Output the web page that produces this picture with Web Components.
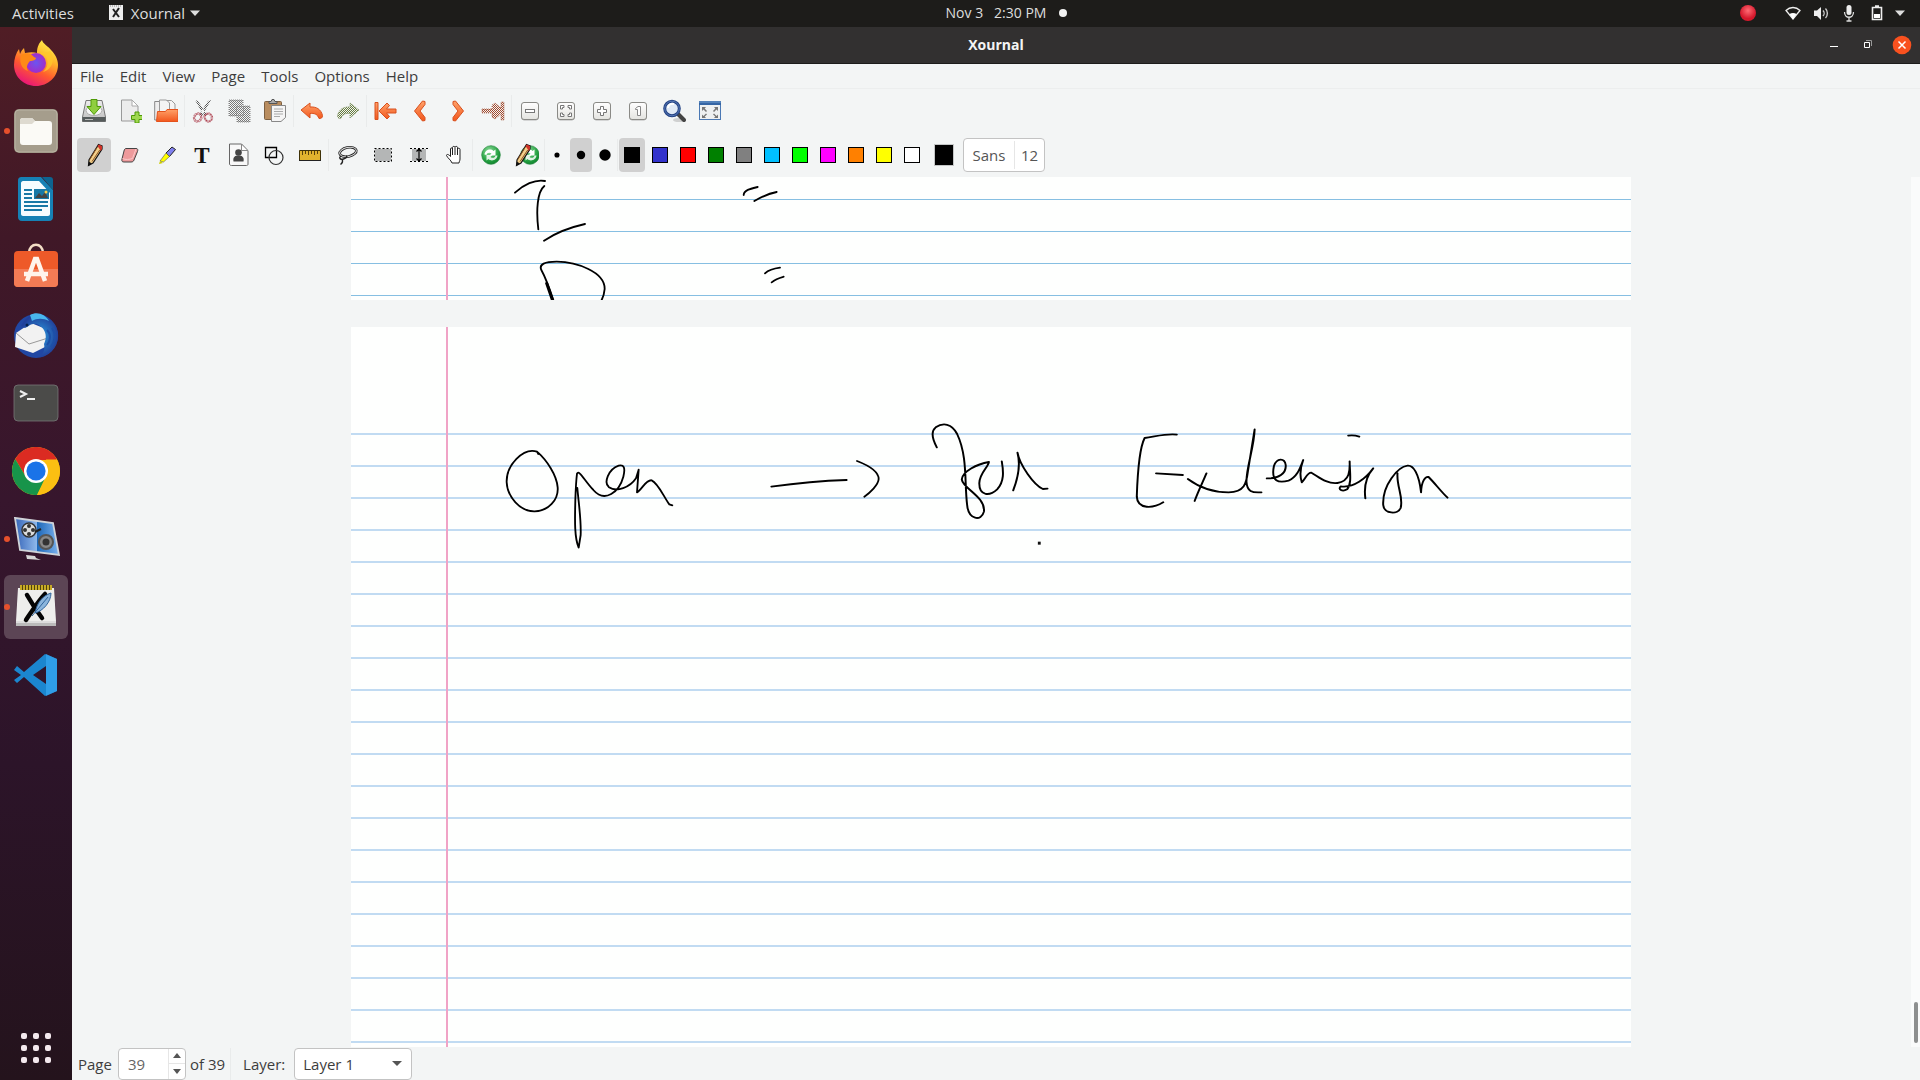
<!DOCTYPE html>
<html lang="en">
<head>
<meta charset="utf-8">
<title>Xournal</title>
<style>
html, body { margin: 0; height: 100%; }
body { font-family: "Open Sans", "Noto Sans", sans-serif; font-size: 15px; line-height: 20px; color: #3d3d3d; overflow: hidden; }
</style>
</head>
<body>
<desk-shell>
  <desk-topbar slot="top"></desk-topbar>
  <desk-launcher slot="side"></desk-launcher>
  <xj-window>
    <xj-titlebar slot="title">Xournal</xj-titlebar>
    <xj-menubar slot="bars"></xj-menubar>
    <xj-maintools slot="bars"></xj-maintools>
    <xj-pentools slot="bars"></xj-pentools>
    <xj-canvas></xj-canvas>
    <xj-statusbar slot="status"></xj-statusbar>
  </xj-window>
</desk-shell>
<script>
const define = (name, html, after) => {
  const t = document.createElement('template');
  t.innerHTML = html;
  customElements.define(name, class extends HTMLElement {
    connectedCallback() {
      if (this.shadowRoot) return;
      this.attachShadow({ mode: 'open' }).append(t.content.cloneNode(true));
      if (after) after(this, this.shadowRoot);
    }
  });
};

const checker = (id, c) => `<pattern id="${id}" width="2" height="2" patternUnits="userSpaceOnUse"><path d="M0 0h1v1H0zM1 1h1v1H1z" fill="${c}"/></pattern>`;
const orange = '<linearGradient id="o" x2="0" y2="1"><stop stop-color="#ffa26a"/><stop offset="1" stop-color="#f2571d"/></linearGradient>';
const tile = inner => `<linearGradient id="k" x2="0" y2="1"><stop stop-color="#fff"/><stop offset="1" stop-color="#e4e4e0"/></linearGradient><rect x="3.500" y="4" width="17" height="17" rx="2.500" fill="none" stroke="#777" opacity=".5"/><rect x="3.500" y="3.500" width="17" height="17" rx="2.500" fill="url(#k)" stroke="#8a8a86"/>${inner}`;
const greenBall = '<radialGradient id="g" cx=".4" cy=".3" r=".8"><stop stop-color="#8fdc9b"/><stop offset=".6" stop-color="#28a444"/><stop offset="1" stop-color="#087a26"/></radialGradient><circle cx="12" cy="12" r="9.300" fill="url(#g)" stroke="#2a8a43" stroke-width=".7"/><path d="M5.500 11.500C6 7 11.500 5 14.500 8l2-1.500v6h-6l2-2C10.500 9 8 9.500 7.500 12z" fill="#fff"/><path d="M18.500 12.500C18 17 12.500 19 9.500 16l-2 1.500V12h6l-2 2c2 1.500 4.500 1 5-1.500z" fill="#fff" opacity=".85"/>';
const pencil = '<path d="M16.500 1.500l3.500 1.500v3L11 20l-4.500 2.500L7 17z" fill="#f3cf8a" stroke="#111" stroke-width="1.200"/><path d="M15.500 3l1.300-1.400L20 3v3l-1.200 2z" fill="#cf3328"/><path d="M10 18.500L17.700 7M7.800 16.500L15 4.500" stroke="#8c5523" fill="none"/><path d="M7 18.800L6.300 23 10 20.500z" fill="#111"/>';

const ICONS = {
  save: '<linearGradient id="m" x2="0" y2="1"><stop stop-color="#eee"/><stop offset="1" stop-color="#bbb"/></linearGradient><path d="M4 1.500h16L23.500 18v4.500H.500V18z" fill="url(#m)" stroke="#777"/><path d="M.5 18h23v4.500H.5z" fill="#555b5b"/><path d="M3 20.500h8" stroke="#bbb"/><ellipse cx="12" cy="11.500" rx="8" ry="5" fill="#f7f7f7" stroke="#aaa"/><path d="M9 .5h6v7h4l-7 8-7-8h4z" fill="#8fce3f" stroke="#4e9a06"/>',
  newpage: '<path d="M3.500 1H14l6 6v15H3.500z" fill="#ececec" stroke="#999"/><path d="M14 1v6h6z" fill="#fff" stroke="#aaa"/><path d="M17 13h4v3.500h3.500v4H21V24h-4v-3.500h-3.500v-4H17z" fill="#9fd84f" stroke="#4e9a06"/>',
  open: orange+'<path d="M.7 2.500h6L8 4v17H.7z" fill="#eee" stroke="#888"/><path d="M5.500 1h7l3 3v9h-10zM12.500 1.500h5L21 5v8h-7" fill="#f4f4f4" stroke="#999"/><path d="M3.500 12.500h8l1.500-2h11v12H2.500z" fill="url(#o)" stroke="#e4521c"/>',
  cut: '<defs>'+checker('c','#555')+checker('r','#a52a3a')+'</defs><path d="M4 1l3 1 9 14-3 1zM20 1l-3 1L8 16l3 1z" fill="url(#c)"/><g fill="none" stroke="url(#r)" stroke-width="2.500"><ellipse cx="6.700" cy="18.500" rx="3.500" ry="4" transform="rotate(25 6.700 18.500)"/><ellipse cx="17.300" cy="18.500" rx="3.500" ry="4" transform="rotate(-25 17.300 18.500)"/></g>',
  copy: '<defs>'+checker('c','#777')+'</defs><path d="M2 1h14v6h7v16H10v-6H2z" fill="url(#c)"/><path d="M2 1h14v16H2zM10 7h13v16H10z" fill="none" stroke="#888" stroke-dasharray="1 1"/>',
  paste: '<rect x="1.500" y="2.500" width="17" height="18" rx="1" fill="#b98d5f" stroke="#7d6041"/><path d="M6 4.500V2.500h2L9 .500h2l1 2h2v2z" fill="#aaa" stroke="#555"/><path d="M8.500 6.500h14v12L18 22.500H8.500z" fill="#f5f5f5" stroke="#888"/><path d="M11 10h9M11 12.500h9M11 15h9M11 17.500h6" stroke="#aaa"/>',
  undo: orange+'<path d="M1 11L10 4v4c6-.5 11 2 12.500 8.500.3 2-1.500 3.500-3.500 3C17.500 15 14 14 10 14.500V19z" fill="url(#o)" stroke="#d8511f"/>',
  redo: '<defs>'+checker('c','#667b3c')+'</defs><path d="M23 11l-9-7v4C8 7.500 3 10 1.500 16.500c-.3 2 1.500 3.500 3.500 3C6.500 15 10 14 14 14.500V19z" fill="url(#c)" stroke="#84986a" stroke-dasharray="1 1"/>',
  first: orange+'<path d="M2 3.500h3v17H2zM6 12l8-8 2.500 2.500L13.500 10H23v4h-9.500l3 3.500L14 20z" fill="url(#o)" stroke="#d8511f"/>',
  prev: orange+'<path d="M16 2.500l-2.500-.5-8 10 8 10 2.500-.5v-3L11 12l5-6.500z" fill="url(#o)" stroke="#d8511f"/>',
  next: orange+'<path d="M8 2.500l2.500-.5 8 10-8 10L8 21.500v-3L13 12 8 5.500z" fill="url(#o)" stroke="#d8511f"/>',
  last: '<defs>'+checker('c','#a3492c')+'</defs><path d="M1 10h10V6l3-2 6 5V3h3v18h-3v-6l-6 5-3-2v-4H1z" fill="url(#c)" stroke="#b57a66" stroke-dasharray="1 1"/>',
  zoomout: tile('<rect x="7.500" y="10.500" width="9" height="3" fill="#fff" stroke="#777"/>'),
  fit: tile('<path d="M6.500 10V6.500H10v2H8.500V10zM14 6.500h3.500V10h-2V8.500H14zM6.500 14v3.500H10v-2H8.500V14zM14 17.500h3.500V14h-2v1.500H14z" fill="#fff" stroke="#777"/>'),
  zoomin: tile('<path d="M10.500 7.500h3v3h3v3h-3v3h-3v-3h-3v-3h3z" fill="#fff" stroke="#777"/>'),
  one: tile('<path d="M9.500 9.500L12 7.500h2.500v9h-3v-6h-2z" fill="#fff" stroke="#888"/>'),
  find: '<ellipse cx="17" cy="21" rx="6" ry="2" fill="#999" opacity=".4"/><path d="M16 15l6 6" stroke="#444" stroke-width="4" stroke-linecap="round"/><circle cx="10" cy="9.500" r="7.300" fill="#dfe9f6" stroke="#244384" stroke-width="3"/><circle cx="10" cy="9.500" r="7.300" fill="none" stroke="#5577b5"/><path d="M6 9c0-3 3-5 6-4" stroke="#fff" stroke-width="2" fill="none"/>',
  full: '<rect x="1.500" y="2.500" width="21" height="18" fill="#eef0f1" stroke="#4a78b4"/><path d="M1 2h22v4H1z" fill="#3465a4"/><path d="M1 3h22" stroke="#729fcf"/><path d="M4 8h4L6.700 9.500 9 12l-1 1-2.500-2.500L4 12zM20 8h-4l1.300 1.500L15 12l1 1 2.500-2.500L20 12zM4 19h4l-1.300-1.400L9 15.500l-1-1L5.500 17 4 15.500zM20 19h-4l1.300-1.400-2.300-2.100 1-1 2.500 2.500 1.500-1.500z" fill="#777"/>',
  pencil,
  eraser: '<path d="M8 5.500h10c2 0 2 1.500 1.500 3L16 17c-.5 1.500-1.500 2-3 2H6c-2 0-2.500-1-2-3l2-8c.3-1.500 1-2.500 2-2.500z" fill="#ee9a9c" stroke="#444"/><path d="M4.500 15.500c3 1.500 7 1 10 0L18 6" fill="none" stroke="#fbc9c9"/>',
  marker: '<path d="M12 10l6-6 3.500 2.500-6 7z" fill="#7f80ee" stroke="#222"/><path d="M12 10l3.500 3.500-6 5.500L6 18z" fill="#ff0" stroke="#555" stroke-width=".6"/><path d="M6 18l3 2-4 1z" fill="#cc0"/>',
  text: '<text x="12" y="20" text-anchor="middle" font-family="Liberation Serif" font-weight="bold" font-size="23" fill="#111">T</text>',
  image: '<path d="M3.500 1h12L22 8v13c0 1-.5 1.500-1.500 1.500h-15c-1 0-2-.5-2-1.500z" fill="#f8f8f8" stroke="#666"/><path d="M15.500 1v6.500H22z" fill="#fff" stroke="#888"/><circle cx="12.500" cy="9.500" r="3.300" fill="#444"/><path d="M7.500 18.500c-1-5 2-6 5-6s6 1 5 6z" fill="#444"/>',
  shapes: '<path d="M3.500 4.500h11v10h-11z" fill="none" stroke="#000" stroke-width="1.300"/><circle cx="14" cy="14.500" r="7" fill="none" stroke="#333" stroke-width="1.200"/>',
  ruler: '<path d="M1.500 7.500h21v10h-21z" fill="#e0b32e" stroke="#3f3208"/><path d="M1 17.500h22" stroke="#222"/><path d="M4.500 8v4M7.500 8v3M10.500 8v4M13.500 8v3M16.500 8v4M19.500 8v3" stroke="#5a430b"/>',
  lasso: '<ellipse cx="13" cy="9" rx="8.500" ry="4.500" transform="rotate(-12 13 9)" fill="none" stroke="#222" stroke-width="2.600"/><ellipse cx="13" cy="9" rx="8.500" ry="4.500" transform="rotate(-12 13 9)" fill="none" stroke="#ddd"/><path d="M6 13c-3 2 0 4 2.500 3S13 14 11 13M7 16c1 2 .5 4-1.500 5.500" fill="none" stroke="#222" stroke-width="1.400"/>',
  rect: '<path d="M4 6h16v12H4z" fill="#b4b6b6"/><path d="M3.500 5.500h17v13h-17z" fill="none" stroke="#000" stroke-dasharray="2 2"/>',
  vspace: '<path d="M5 6h14v12H5z" fill="#b4b6b6"/><path d="M3 5.500h18M3 18.500h18" stroke="#000" stroke-dasharray="2 2"/><path d="M12 6v12M9.500 8.500L12 6l2.500 2.500M9.500 15.500L12 18l2.500-2.500" fill="none" stroke="#000" stroke-width="1.200"/>',
  hand: '<path d="M9 20c-1-3-4.500-5-5.500-7.500 0-1.500 2-1.500 4 1V6c0-1.500 2-1.500 2 0V4.500c0-1.500 2.500-1.500 2.500 0C12 3 14.500 3 14.500 4.500V6c.5-1.500 2.500-1 2.500.5V16c0 2-1 2.500-1 4z" fill="#fff" stroke="#222"/><path d="M9.500 6v6M12 5v7M14.500 6v6" stroke="#222"/>',
  refresh: greenBall,
  penrefresh: '<g transform="translate(3 0)">'+greenBall+'</g><g transform="translate(-5 0)">'+pencil+'</g>',
  dot1: '<circle cx="12" cy="12" r="2.800"/>', dot2: '<circle cx="12" cy="12" r="4.600"/>', dot3: '<circle cx="12" cy="12" r="6.200"/>',
  // launcher, 48 x 48
  firefox: '<linearGradient id="f" x1=".8" y1="0" x2=".3" y2="1"><stop stop-color="#fff44f"/><stop offset=".35" stop-color="#ffb52a"/><stop offset=".65" stop-color="#ff5b2e"/><stop offset="1" stop-color="#e8127c"/></linearGradient><radialGradient id="p"><stop stop-color="#6a55f0"/><stop offset="1" stop-color="#a32cc8"/></radialGradient><path d="M30 1c1 4 6 6 9 10 4 4 7 9 7 15 0 12-10 21-22 21S2 38 2 26c0-6 2-12 5-16l1 5c1-3 3-5 4-6l1 5c5-1 9-1 12 0C25 8 27 4 30 1z" fill="url(#f)"/><circle cx="24" cy="24" r="10" fill="url(#p)"/><path d="M9 16c5-3 10-2 13 2l2 1c0 2-3 3-6 3-3 3-4 7-2 10C9 30 7 22 9 16z" fill="#ff8a16"/><path d="M28 14c9 2 10 13 3 19 9-2 13-13 7-21-3 2-7 1-10 2z" fill="#ffc72c" opacity=".8"/>',
  files: '<rect x="2" y="2" width="44" height="44" rx="5" fill="#8e8675"/><rect x="3" y="3" width="42" height="42" rx="4" fill="#a59d8c" stroke="#bab3a4"/><path d="M8 14c0-2 1-3 3-3h9l3 3h14c2 0 3 1 3 3v18c0 2-1 3-3 3H11c-2 0-3-1-3-3z" fill="#fbfaf6"/><path d="M8 17v-3c0-2 1-3 3-3h9l3 3-3 3z" fill="#dedad0"/>',
  writer: '<path d="M10 2h19l12 13v27c0 2-1 4-4 4H10c-3 0-4-2-4-4V6c0-3 1-4 4-4z" fill="#1681b5"/><path d="M30 2h8c2 0 3 1 3 3v10z" fill="#0d6490"/><path d="M11 6h16l11 12v21c0 1-1 2-2 2H11c-1 0-2-1-2-2V8c0-1 1-2 2-2z" fill="#f6fcff"/><path d="M12 15h8M12 19h8M12 23h8M12 27h24M12 31h24M12 35h18" stroke="#1878a6" stroke-width="2"/><path d="M22 14h15v10H22z" fill="#1878a6"/><path d="M23 23l4-5 3 3 3-4 3 6z" fill="#444"/><circle cx="34" cy="17" r="1.500" fill="#fcd04c"/>',
  software: '<path d="M17 10c0-11 14-11 14 0" fill="none" stroke="#f3ddc5" stroke-width="2.500"/><rect x="2" y="8" width="44" height="36" rx="4" fill="#ee5a29"/><path d="M2 26h44v14a4 4 0 0 1-4 4H6a4 4 0 0 1-4-4z" fill="#f37b55"/><path d="M15 38l8-22h2l8 22M12 31h24" fill="none" stroke="#fff4ec" stroke-width="4.500"/>',
  thunderbird: '<radialGradient id="t"><stop stop-color="#2b9be0"/><stop offset="1" stop-color="#21409a"/></radialGradient><circle cx="24" cy="25" r="22" fill="#2147a3"/><path d="M4 22l15-10 15 6 3 16-16 8-18-6z" fill="#f2f2f2"/><path d="M4 22l13 11 19-6" fill="none" stroke="#999"/><path d="M9 15c5-12 20-16 30-6 10 9 9 23 0 31-4 4-8 6-11 6 4-4 5-8 4-13 4-9 1-16-7-20-6-1-9 3-12 4z" fill="url(#t)"/><path d="M18 4c7-4 15-1 19 6-6-3-12-3-17 0z" fill="#49b7ed"/><path d="M35 19c4 4 4 10 0 15M40 17c4 6 3 13-1 19" fill="none" stroke="#1c4fa8" stroke-width="2"/><circle cx="15" cy="14" r="1.500" fill="#06204f"/>',
  terminal: '<rect x="2" y="6" width="44" height="36" rx="4" fill="#4b4b49" stroke="#777" stroke-width=".8"/><path d="M8 12l6 3-6 3M15 20h8" fill="none" stroke="#eee" stroke-width="2"/>',
  chrome: '<circle cx="24" cy="24" r="24" fill="#fbbf12"/><path d="M3.200 12A24 24 0 0 1 44.800 12L44 13H24L14 30z" fill="#db2b22"/><path d="M3.200 12L14 30l20-1-9 19A24 24 0 0 1 3.200 12z" fill="#17944a"/><path d="M34 12.500h11A24 24 0 0 1 25 48l10-18z" fill="#fbbf12"/><circle cx="24" cy="24" r="12" fill="#fff"/><circle cx="24" cy="24" r="9.600" fill="#1a73e8"/>',
  recorder: '<linearGradient id="b" x2="1"><stop stop-color="#3665b8"/><stop offset=".49" stop-color="#8db7ea"/><stop offset=".5" stop-color="#1c67b8"/><stop offset="1" stop-color="#7db3ef"/></linearGradient><path d="M3 3l38 5 6 32L8 35z" fill="url(#b)" stroke="#cfd3d8" stroke-width="1.800"/><circle cx="17" cy="15" r="7" fill="#ddd" stroke="#333" stroke-width="1.500"/><g fill="#333"><circle cx="17" cy="11" r="2"/><circle cx="13" cy="15" r="2"/><circle cx="21" cy="15" r="2"/><circle cx="17" cy="19" r="2"/></g><path d="M23 17l6-3" stroke="#222" stroke-width="2"/><circle cx="34" cy="27" r="7" fill="#888" stroke="#555" stroke-width="2"/><circle cx="34" cy="27" r="3.500" fill="#333"/><path d="M14 40l9 1 1 2 5 2-14-1z" fill="#d8d8d8"/>',
  xournal: '<path d="M6 5h36l2 33H4z" fill="#eeeeec"/><path d="M4 38h40v5H4z" fill="#bbb"/><path d="M4 39h40" stroke="#fff"/><path d="M8 2h32v5H8z" fill="#51430c"/><path d="M9 2v5M12 2v5M15 2v5M18 2v5M21 2v5M24 2v5M27 2v5M30 2v5M33 2v5M36 2v5M39 2v5" stroke="#e7c62e" stroke-width="1.600"/><path d="M15 12c4 7 9 15 15 23M33 11c-6 6-13 17-19 26" fill="none" stroke="#050505" stroke-width="4.500" stroke-linecap="round"/><path d="M39 10c-9 3-14 10-16 20 8-2 16-11 16-20z" fill="#8bb5dc" stroke="#31659c"/><path d="M20 33l16-19" stroke="#31659c"/>',
  vscode: '<path d="M33 3l12 5v32l-12 5L12 26l-7 6-3-3 7-5-7-5 3-4 7 6zm1 12L21 24l13 9z" fill="#1b86cf" fill-rule="evenodd"/><path d="M34 3l11 5v32l-11 5z" fill="#35a4ee" opacity=".8"/>',
  // panel
  notes: '<rect x="4" y="4" width="14" height="15" fill="#eee"/><path d="M5 5h12" stroke="#888" stroke-dasharray="1 1"/><path d="M8 8l6 8M14 7l-6 9" stroke="#222" stroke-width="2"/>',
  record: '<radialGradient id="q" cy=".35"><stop stop-color="#ff6b74"/><stop offset="1" stop-color="#d5182c"/></radialGradient><circle cx="12" cy="12" r="8" fill="url(#q)"/>',
  wifi: '<path d="M5 9.500C9 5.500 15 5.500 19 9.500L12 18z" fill="none" stroke="#eee" stroke-width="1.300"/><path d="M8.500 13c2-1.500 5-1.500 7 0L12 18.500z" fill="#fff"/>',
  volume: '<path d="M5 9.500h3L12 6v13l-4-4H5z" fill="#eee"/><path d="M14 9.500c1.500 1.500 1.500 4 0 5.500M16.500 7.500c2.500 2.500 2.500 7 0 9.500" fill="none" stroke="#ccc" stroke-width="1.400"/>',
  mic: '<rect x="9.500" y="4" width="5" height="10" rx="2.500" fill="#eee"/><path d="M7.500 11c0 7 9 7 9 0M12 16v4M9.500 20h5" fill="none" stroke="#ddd" stroke-width="1.300"/>',
  battery: '<path d="M7.500 6.500h9v12h-9zM10 5h4" fill="none" stroke="#eee" stroke-width="1.600"/><path d="M9 13h6v4H9z" fill="#fff"/>',
  caret: '<path d="M7 9.500h10L12 15z" fill="currentColor"/>',
  minimize: '<path d="M8 13.500h8" stroke="#fff"/>',
  restore: '<path d="M8.500 9.500h5v5h-5z" fill="none" stroke="#fff"/><path d="M10 7.500h5.500V13" fill="none" stroke="#999"/>',
  close: '<circle cx="12" cy="12" r="9.300" fill="#f9511f"/><path d="M8.500 8.500l7 7M15.500 8.500l-7 7" stroke="#fff" stroke-width="1.500"/>'
};

define('ui-icon', '<style>:host{display:block;flex:none;width:var(--icon,24px);height:var(--icon,24px)}svg{display:block;width:100%;height:100%}</style><svg aria-hidden="true"></svg>', (el, root) => {
  const n = +el.getAttribute('box') || 24;
  const svg = root.querySelector('svg');
  svg.setAttribute('viewBox', `0 0 ${n} ${n}`);
  svg.innerHTML = ICONS[el.getAttribute('name')];
});

define('desk-shell', `<style>
:host{display:grid;grid-template:"top top" auto "side main" minmax(0,1fr) / 72px minmax(0,1fr);height:100vh;background:#f3f5f5}
.top{grid-area:top}.side{grid-area:side;display:grid}.main{grid-area:main;display:grid;min-height:0}
</style><div class="top"><slot name="top"></slot></div><div class="side"><slot name="side"></slot></div><div class="main"><slot></slot></div>`);

define('desk-topbar', `<style>
:host{display:grid;grid-template-columns:1fr auto 1fr;align-items:center;box-sizing:border-box;height:27px;padding:0 0 2px 72px;background:#1d1c1a;color:#dedede}
button{all:unset;display:flex;align-items:center}
.left{display:flex;gap:31px;margin-left:-60px}
.left button{gap:2px}
.clock{gap:13px;font-size:14px}.clock i{width:8px;height:8px;border-radius:50%}.clock i:last-child{background:#f2f2f2}
.clock span{white-space:pre}
.right{display:flex;justify-content:flex-end;padding-right:8px;gap:4px}
.right ui-icon:first-child{margin-right:17px}
.right ui-icon:last-child{margin-left:-5px}
.app ui-icon:last-child{margin-left:-4px}
</style>
<div class="left"><button>Activities</button><button class="app"><ui-icon name="notes"></ui-icon>Xournal <ui-icon name="caret"></ui-icon></button></div>
<button class="clock"><i></i><span>Nov 3   2:30 PM</span><i></i></button>
<div class="right"><ui-icon name="record"></ui-icon><ui-icon name="wifi"></ui-icon><ui-icon name="volume"></ui-icon><ui-icon name="mic"></ui-icon><ui-icon name="battery"></ui-icon><ui-icon name="caret"></ui-icon></div>`);

const APPS = [['firefox','Firefox'],['files','Files','run'],['writer','LibreOffice Writer'],['software','Ubuntu Software'],['thunderbird','Thunderbird'],['terminal','Terminal'],['chrome','Chrome'],['recorder','Screen recorder','run'],['xournal','Xournal','run on'],['vscode','Code']];
define('desk-launcher', `<style>
:host{display:flex;flex-direction:column;justify-content:space-between;padding:4px 4px 0;background:linear-gradient(#501d25,#401827 20%,#37162d 45%,#2c1429 70%,#24131c)}
button{all:unset;position:relative;display:grid;place-items:center;width:64px;height:64px;border-radius:6px;margin-bottom:4px;--icon:48px}
.on{background:#5c4555}
.run::before{content:"";position:absolute;left:0;width:6px;height:6px;border-radius:50%;background:#e6502c}
.grid{display:grid;grid-template-columns:repeat(3,6px);gap:6px}
.grid i{height:6px;border-radius:2px;background:#f4e9ee}
.all{margin:0}
</style><nav>${APPS.map(a => `<button class="${a[2] || ''}" aria-label="${a[1]}"><ui-icon box="48" name="${a[0]}"></ui-icon></button>`).join('')}</nav>
<button class="all" aria-label="Show applications"><span class="grid">${'<i></i>'.repeat(9)}</span></button>`);

define('xj-window', `<style>
:host{display:flex;flex-direction:column;min-width:0;min-height:0}
.body{flex:1;display:grid;min-height:0}
</style><slot name="title"></slot><slot name="bars"></slot><div class="body"><slot></slot></div><slot name="status"></slot>`);

define('xj-titlebar', `<style>
:host{display:grid;grid-template-columns:1fr auto 1fr;align-items:center;height:36px;background:#323030;border-bottom:1px solid #1d1c1b;color:#f4f4f4}
h1{grid-column:2;margin:0;font-size:14px;line-height:20px}
div{display:flex;justify-content:flex-end;gap:10px;padding-right:6px}
button{all:unset}
</style><h1><slot></slot></h1><div><button aria-label="Minimize"><ui-icon name="minimize"></ui-icon></button><button aria-label="Restore"><ui-icon name="restore"></ui-icon></button><button aria-label="Close"><ui-icon name="close"></ui-icon></button></div>`);

define('xj-menubar', `<style>
:host{display:flex;height:24px;align-items:center;gap:16px;padding:0 8px;border-bottom:1px solid #eceeee}
button{all:unset;line-height:24px}
</style>${['File','Edit','View','Page','Tools','Options','Help'].map(m => `<button>${m}</button>`).join('')}`);

const barStyle = `
:host{display:flex;height:44px;align-items:center;padding-left:4px}
button{all:unset;box-sizing:border-box;display:grid;place-items:center;width:34px;height:34px;margin:0 1px;border-radius:4px}
hr{width:1px;height:32px;margin:0;border:0;background:#e9ebeb}
.on{background:#d0d0d0}`;
const tools = list => list.map(n => n === '|' ? '<hr>' : `<button class="${n === 'pencil' ? 'on' : ''}" aria-label="${n}"><ui-icon name="${n}"></ui-icon></button>`).join('');
define('xj-maintools', `<style>${barStyle}</style>` + tools(['save','newpage','open','|','cut','copy','paste','|','undo','redo','|','first','prev','next','last','|','zoomout','fit','zoomin','one','find','full']));

const COLORS = ['#000000','#3333cc','#ff0000','#008000','#808080','#00c0ff','#00ff00','#ff00ff','#ff8000','#ffff00','#ffffff'];
define('xj-pentools', `<style>${barStyle}
hr:nth-of-type(2),hr:nth-of-type(3){margin-left:-1px}
.dot{width:22px}
.sw{width:26px}.sw i{width:14px;height:14px;border:1px solid #000;background:var(--c)}
.cur i{width:18px;height:20px;background:#000;outline:1px solid #c4c6c6}
.font{display:flex;width:82px;border:1px solid #c3c3c3;background:#fff;color:#555}
.font span{flex:1;text-align:center}.font span+span{flex:none;width:29px;border-left:1px solid #e6e6e6;line-height:28px}
</style>` + tools(['pencil','eraser','marker','text','image','shapes','ruler','|','lasso','rect','vspace','hand','|','refresh','penrefresh','|']) +
['dot1','dot2','dot3'].map(d => `<button class="dot${d === 'dot2' ? ' on' : ''}" aria-label="${d}"><ui-icon name="${d}" style="--icon:22px"></ui-icon></button>`).join('') + '<hr>' +
COLORS.map((c, i) => `<button class="sw${i ? '' : ' on'}" aria-label="${c}" style="--c:${c}"><i></i></button>`).join('') +
`<button class="cur" aria-label="Current color"><i></i></button><button class="font"><span>Sans</span><span>12</span></button>`);

const INK = {
  upper: `<g transform="translate(129 -7) scale(.33333)" stroke-width="5.500"><path d="M105 68C130 45 165 27 195 33M193 48C172 65 168 120 175 178M192 212C225 190 270 172 315 162M791 75C792 60 812 56 833 51M823 93C845 80 868 70 890 66M855 310C868 298 885 295 900 293M875 337C888 326 900 323 911 320M220 390C210 360 198 325 184 300C176 282 195 275 230 275C290 276 375 305 374 357C373 370 370 380 364 392"/><path stroke-width="9" d="M200 340L218 392"/></g>`,
  lower: `<g transform="translate(129 83) scale(.33333)" stroke-width="5.500"><path d="M175 132L171 125C130 112 78 165 80 217C82 260 120 305 164 304C205 303 236 270 233 232C230 195 200 150 171 125M292 234C296 280 304 330 302 375L296 413C282 380 285 320 286 270C287 240 288 215 291 191C297 178 312 210 340 240C375 280 418 245 430 200C437 172 431 163 416 167C385 178 370 218 387 232C410 248 450 232 468 205L476 179L471 247C485 240 498 208 515 211C535 220 552 262 568 283L577 286M874 230C930 222 1030 212 1100 210M1131 153C1170 168 1196 185 1196 207C1195 225 1170 248 1153 260"/></g>
<g transform="translate(549 83) scale(.35714 .33333)" stroke-width="5.500"><path d="M103 112C92 90 85 65 100 52C120 37 145 40 160 72C190 140 180 220 188 285C192 330 228 335 235 305C240 260 175 235 173 208C175 185 215 162 249 156C248 170 222 190 222 220C222 260 252 258 272 238C292 215 290 185 285 154M329 128C337 160 330 205 317 241M329 128C335 165 375 225 400 237L413 236M775 74C745 70 715 80 685 84C670 115 665 195 663 260C665 300 710 295 737 277M717 190L792 195M806 207C835 230 875 247 920 247C965 246 970 220 974 185L993 58C992 110 970 170 970 215C972 245 985 249 1012 247M858 190C847 218 835 243 825 273M1027 205C1060 207 1082 190 1080 165C1077 143 1055 143 1047 168C1038 215 1060 220 1088 212C1113 200 1120 175 1129 150C1120 175 1120 200 1125 217C1135 207 1140 187 1152 188C1172 200 1195 223 1225 219C1260 214 1260 180 1259 154C1259 185 1266 220 1252 238C1238 247 1225 237 1234 229C1270 235 1305 205 1325 175C1300 205 1300 240 1303 265M1255 77C1265 75 1275 76 1286 80M1459 247C1453 190 1437 165 1421 167C1395 170 1350 225 1353 285C1355 312 1395 315 1402 293C1410 260 1390 230 1393 190M1459 247C1460 215 1470 199 1480 201C1498 220 1515 245 1533 263"/><path stroke="none" fill="#111" d="M386 395h8v9h-8z"/></g>`
};
// A sheet: optional blank header strip, then a rule every 32px, and the ink on top.
define('xj-sheet', `<style>
:host{display:flex;flex-direction:column;position:relative;overflow:hidden;background:#fefffe}
.head{flex:none;height:var(--head,0)}
.rules{flex:1;background:repeating-linear-gradient(transparent 0 var(--gap),var(--rule) var(--gap) 32px)}
.margin,svg{position:absolute;inset:0}
.margin{left:95px;width:2px;background:#f0a3c6}
svg{width:100%;height:100%;fill:none;stroke:#000;stroke-linecap:round;stroke-linejoin:round}
</style><div class="head"></div><div class="rules"></div><div class="margin"></div><svg></svg>`, (el, root) => {
  root.querySelector('svg').innerHTML = INK[el.getAttribute('ink')];
});
define('xj-canvas', `<style>
:host{display:grid;grid-template-columns:minmax(0,1fr) 9px;min-height:0}
.view{display:flex;flex-direction:column;gap:27px;padding:0 280px 0 279px;min-height:0}
.a{flex:0 0 123px;--rule:#86bfe2;--gap:31px}
.a::before{content:none}
.b{flex:1;--rule:#c1dbf2;--gap:30px;--head:76px}
.a{--head:0px;--shift:-9px}
.bar{display:flex;flex-direction:column;justify-content:flex-end;align-items:center;background:#fafbfb;padding-bottom:4px}
.bar i{width:4px;height:41px;border-radius:2px;background:#8d8f8f}
</style><div class="view"><xj-sheet class="a" ink="upper"></xj-sheet><xj-sheet class="b" ink="lower"></xj-sheet></div><div class="bar"><i></i></div>`, (el, root) => {
  // The upper sheet is scrolled, so its rules start part way through a line.
  root.querySelector('.a').shadowRoot.querySelector('.rules').style.marginTop = '-9px';
});

define('xj-statusbar', `<style>
:host{display:flex;align-items:center;height:33px;padding-left:6px}
input,select{all:unset;box-sizing:border-box;min-width:0}
.spin,.combo{display:flex;box-sizing:border-box;height:32px;border:1px solid #c3c3c3;border-radius:4px;background:#fff}
.spin{width:68px;margin:0 4px 0 6px}.spin input{flex:1;padding-left:9px;color:#666}
.step{display:flex;flex-direction:column;width:16px;border-left:1px solid #e6e6e6}
.step button{all:unset;flex:1;display:grid;place-items:center;overflow:hidden;color:#555}
.step button+button{border-top:1px solid #e6e6e6}
svg{display:block;width:8px;height:5px;fill:#555}
hr{width:1px;height:32px;margin:0 12px 0 5px;border:0;background:#e9ebeb}
.combo{width:118px;margin-left:9px;align-items:center;padding-right:9px}
.combo select{flex:1;padding-left:8px}.combo svg{width:10px}
</style>
<label for="page">Page</label>
<div class="spin"><input id="page" value="39"><div class="step"><button aria-label="Next page"><svg viewBox="0 0 8 5"><path d="M0 5l4-5 4 5z"/></svg></button><button aria-label="Previous page"><svg viewBox="0 0 8 5"><path d="M0 0h8L4 5z"/></svg></button></div></div>
<span>of 39</span><hr><label for="layer">Layer:</label>
<div class="combo"><select id="layer"><option>Layer 1</option></select><svg viewBox="0 0 10 5"><path d="M0 0h10L5 5z"/></svg></div>`);
</script>
</body>
</html>
